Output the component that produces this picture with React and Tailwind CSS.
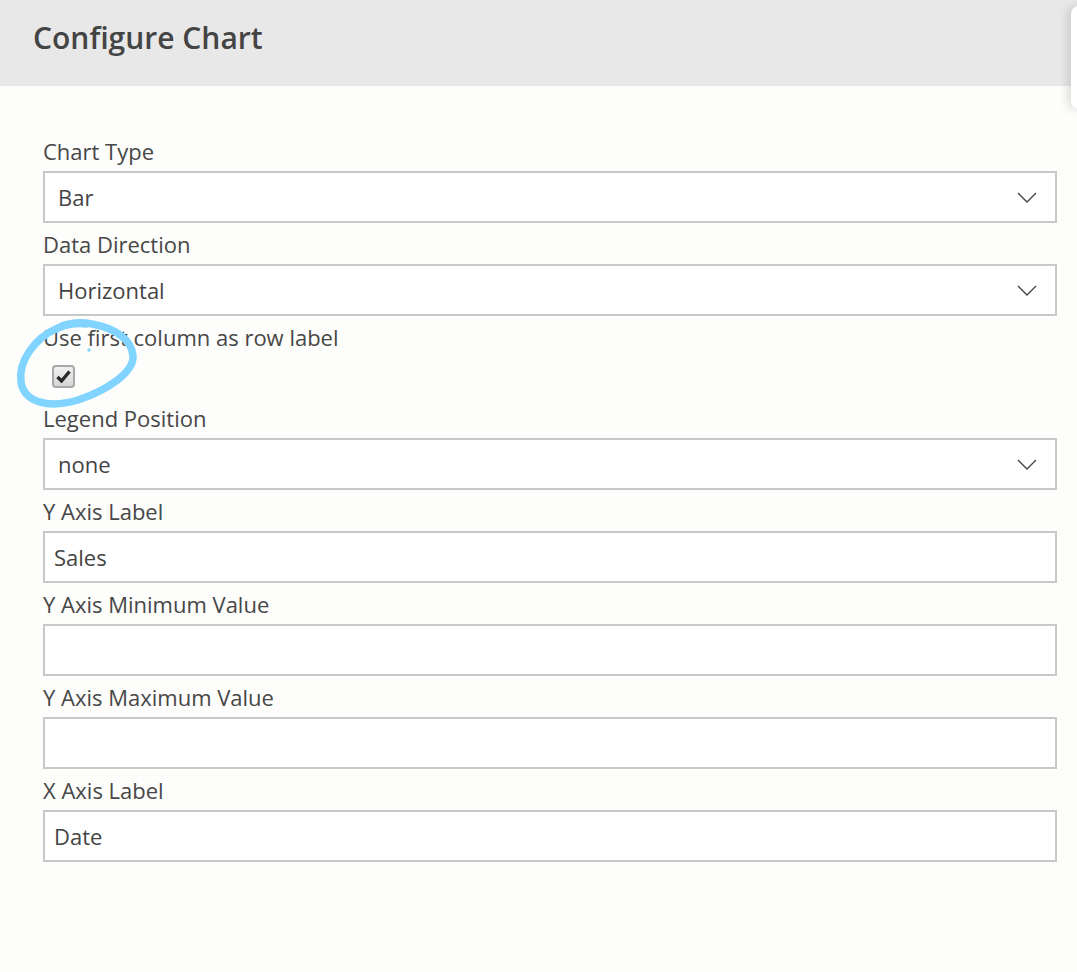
import { ChevronDown } from 'lucide-react'

const fieldFont = { fontFamily: '"Open Sans", "Noto Sans", sans-serif' }

const Label = ({ children }) => (
    <div className="h-[41px] flex items-center text-[22px] text-[#474747] leading-none">
        {children}
    </div>
)

const SelectBox = ({ value }) => (
    <div className="h-[52px] border-2 border-[#c8c8c8] bg-white flex items-center justify-between pl-[13px] pr-[18px]">
        <span className="text-[22px] text-[#444]">{value}</span>
        <svg width="20" height="11" viewBox="0 0 20 11" fill="none">
            <path d="M1 1 L10 10 L19 1" stroke="#444" strokeWidth="1.4" />
        </svg>
    </div>
)

const TextBox = ({ value }) => (
    <div className="h-[52px] border-2 border-[#c8c8c8] bg-white flex items-center pl-[9px]">
        <span className="text-[22px] text-[#444]">{value}</span>
    </div>
)

const App = () => {
    return (
        <div className="relative w-[1077px] h-[972px] bg-[#fdfdfb] overflow-hidden" style={fieldFont}>
            {/* Header */}
            <div className="h-[86px] bg-[#e8e8e8] flex items-center pl-[33px] pb-[12px]">
                <h1 className="text-[30px] font-semibold text-[#444]">Configure Chart</h1>
            </div>

            {/* Side panel peeking in */}
            <div className="absolute left-[1071px] top-[6px] w-[60px] h-[103px] bg-white rounded-lg shadow-[-4px_0_10px_rgba(0,0,0,0.12)]" />

            <div className="pt-[44px] pl-[43px] pr-[20px]">
                <Label>Chart Type</Label>
                <SelectBox value="Bar" />
                <Label>Data Direction</Label>
                <SelectBox value="Horizontal" />
                <Label>Use first column as row label</Label>
                <div className="h-[40px] pl-[9px] pt-[8px]">
                    <div className="w-[23px] h-[23px] rounded-[4px] border-2 border-[#a8a8a8] bg-gradient-to-b from-[#f2f2f2] to-[#d6d6d6] flex items-center justify-center">
                        <svg width="15" height="13" viewBox="0 0 15 13">
                            <path d="M1.5 7 L5.5 11 L13.5 1.5" stroke="#2a2a2a" strokeWidth="3.4" fill="none" />
                        </svg>
                    </div>
                </div>
                <Label>Legend Position</Label>
                <SelectBox value="none" />
                <Label>Y Axis Label</Label>
                <TextBox value="Sales" />
                <Label>Y Axis Minimum Value</Label>
                <TextBox value="" />
                <Label>Y Axis Maximum Value</Label>
                <TextBox value="" />
                <Label>X Axis Label</Label>
                <TextBox value="Date" />
            </div>

            {/* Hand-drawn highlight around the checkbox */}
            <svg className="absolute left-0 top-[310px]" width="150" height="105" viewBox="0 0 150 105">
                <path
                    d="M62 16 C72 12 82 12 92 14 C115 18 132 30 133 46 C134 62 108 80 78 90 C48 99 24 92 21 72 C18 52 34 28 58 18 C68 14 78 13 86 14"
                    stroke="#80d4ff"
                    strokeWidth="7.5"
                    fill="none"
                    strokeLinecap="round"
                />
                <circle cx="89" cy="40" r="1.8" fill="#80d4ff" />
            </svg>
        </div>
    )
}

export default App
